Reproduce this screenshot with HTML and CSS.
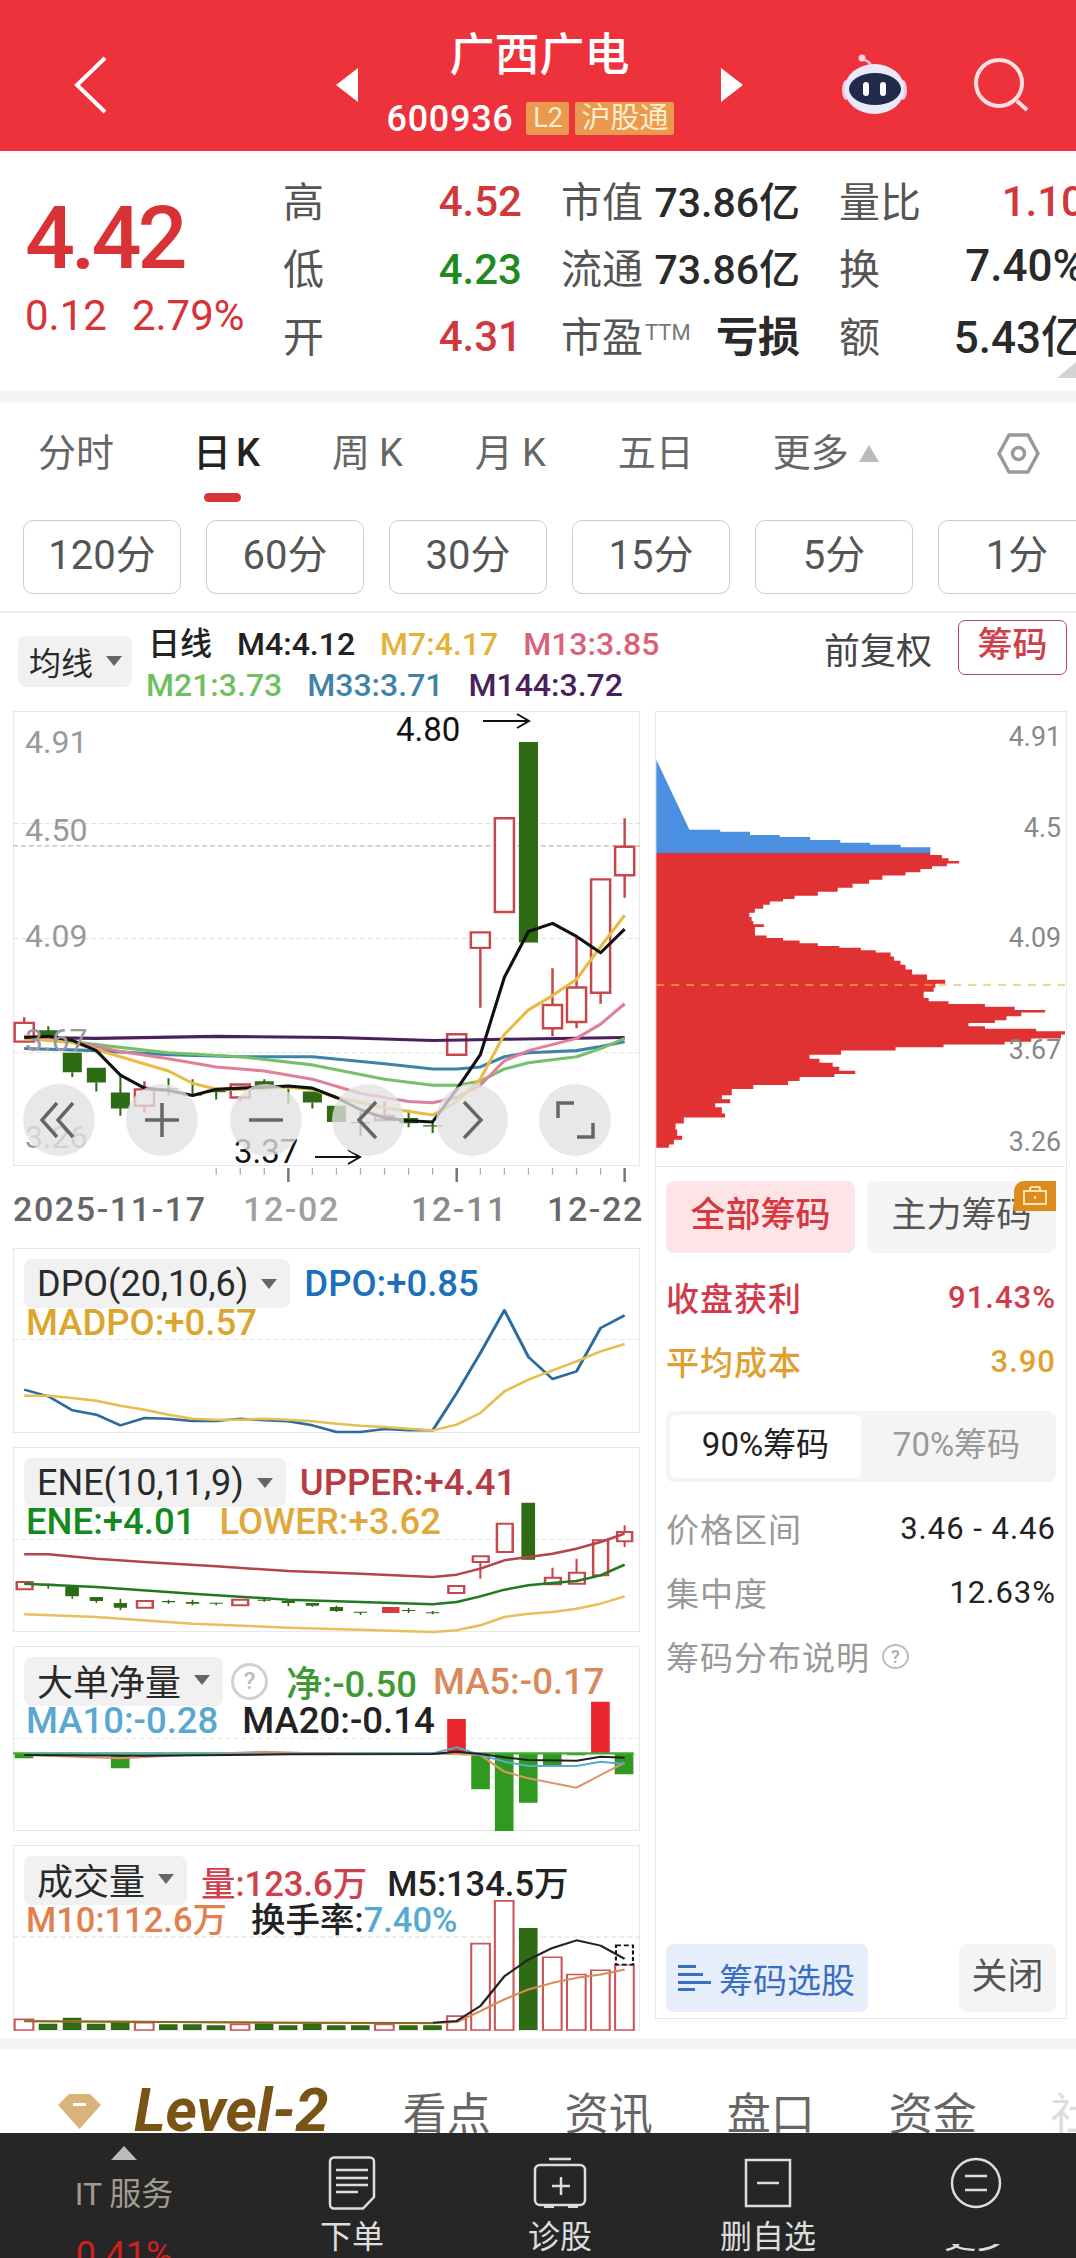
FILE: index.html
```html
<!DOCTYPE html>
<html lang="zh">
<head>
    <meta charset="utf-8">
    <title>广西广电 600936</title>
    <link rel="stylesheet" href="styles.css">
</head>
<body>
<div class="page">

    <header class="header">
        <svg class="back" viewBox="0 0 34 58"><path d="M31 2 3 29l28 27" fill="none" stroke="#fff" stroke-width="4"/></svg>
        <svg class="arrow prev" viewBox="0 0 22 34"><path d="M22 0V34L0 17Z" fill="#fff"/></svg>
        <div class="title-block">
            <div class="title">广西广电</div>
            <div class="code-row">
                <span class="code">600936</span>
                <span class="badge badge-l2">L2</span>
                <span class="badge badge-hk">沪股通</span>
            </div>
        </div>
        <svg class="arrow next" viewBox="0 0 22 34"><path d="M0 0V34L22 17Z" fill="#fff"/></svg>
        <svg class="robot" viewBox="0 0 65 61">
            <path d="M29 12C28 7 24 7 21 5" fill="none" stroke="#f6c6d0" stroke-width="2.5"/>
            <circle cx="20" cy="4" r="3.5" fill="#f8d0d8"/>
            <ellipse cx="4" cy="36" rx="4" ry="10" fill="#f4c8dc"/>
            <ellipse cx="61" cy="36" rx="4" ry="10" fill="#f4c8dc"/>
            <ellipse cx="32.5" cy="35" rx="30" ry="25" fill="#ebe8fa"/>
            <ellipse cx="33" cy="35" rx="26" ry="16" fill="#1f2a4c"/>
            <rect x="21" y="28" width="6" height="14" rx="3" fill="#fff"/>
            <rect x="38" y="28" width="6" height="14" rx="3" fill="#fff"/>
        </svg>
        <svg class="search" viewBox="0 0 57 54">
            <circle cx="26" cy="25" r="23" fill="none" stroke="#ffe0e0" stroke-width="4"/>
            <path d="M44 43 54 52" stroke="#ffe0e0" stroke-width="4"/>
        </svg>
    </header>

    <section class="quote">
        <div class="price-col">
            <div class="price">4.42</div>
            <div class="change"><span>0.12</span><span>2.79%</span></div>
        </div>
        <div class="quote-grid">
            <div class="cell"><span class="lbl">高</span><span class="up">4.52</span></div>
            <div class="cell"><span class="lbl">市值</span><span class="val">73.86亿</span></div>
            <div class="cell"><span class="lbl">量比</span><span class="up">1.10</span></div>
            <div class="cell"><span class="lbl">低</span><span class="down">4.23</span></div>
            <div class="cell"><span class="lbl">流通</span><span class="val">73.86亿</span></div>
            <div class="cell"><span class="lbl">换</span><span class="val val-edge">7.40%</span></div>
            <div class="cell"><span class="lbl">开</span><span class="up">4.31</span></div>
            <div class="cell"><span class="lbl">市盈<sup class="ttm">TTM</sup></span><span class="val val-bold">亏损</span></div>
            <div class="cell"><span class="lbl">额</span><span class="val val-edge">5.43亿</span></div>
        </div>
        <div class="corner"></div>
    </section>

    <nav class="tabs">
        <span class="tab tab-wide">分时</span>
        <span class="tab tab-k active">日K</span>
        <span class="tab tab-k">周K</span>
        <span class="tab tab-k">月K</span>
        <span class="tab tab-wide">五日</span>
        <span class="tab tab-more">更多<i class="tri-up"></i></span>
        <svg class="hex" viewBox="0 0 43 41">
            <path d="M12 2H31L41 20.5 31 39H12L2 20.5Z" fill="none" stroke="#999" stroke-width="3.5" stroke-linejoin="round"/>
            <circle cx="21.5" cy="20.5" r="6" fill="none" stroke="#999" stroke-width="3.5"/>
        </svg>
    </nav>

    <div class="periods">
        <span class="period">120分</span>
        <span class="period">60分</span>
        <span class="period">30分</span>
        <span class="period">15分</span>
        <span class="period">5分</span>
        <span class="period">1分</span>
    </div>

    <main class="chart-area">
        <div class="left-col">
            <div class="ma-legend">
                <div class="chip chip-small">均线<i class="tri-down"></i></div>
                <div class="ma-lines">
                    <div class="ma-row"><span class="dark">日线</span><span class="dark">M4:4.12</span><span class="c-m7">M7:4.17</span><span class="c-m13">M13:3.85</span></div>
                    <div class="ma-row ma-row-2"><span class="c-m21">M21:3.73</span><span class="c-m33">M33:3.71</span><span class="c-m144">M144:3.72</span></div>
                </div>
            </div>

            <div class="panel panel-main">
                <svg class="canvas" viewBox="0 0 627 455">
                    <svg x="0" y="0" width="627" height="455" viewBox="31 247 1512 1116" preserveAspectRatio="none">
                        <g stroke-width="2.5" stroke-dasharray="12 7" fill="none">
                            <path d="M31 523H1543M31 805H1543M31 1085H1543" stroke="#e0e0e0"/>
                            <path d="M31 578H1543" stroke="#c9b89a" stroke-width="3"/>
                        </g>
                        <path d="M116 1020V1050M174 1133V1145M232 1158V1180M290 1140V1240M406 1148V1190M464 1150V1190M521 1175V1200M637 1150V1175M695 1170V1210M753 1207V1222M869 1230V1290M985 1225V1268M1043 1250V1282" stroke="#2f6b14" stroke-width="5" fill="none"/>
                        <path d="M93 1030h46v20h-46zM151 1085h46v48h-46zM209 1122h46v36h-46zM267 1183h46v39h-46zM383 1172h46v3h-46zM441 1187h46v3h-46zM498 1178h46v4h-46zM614 1155h46v15h-46zM672 1170h46v3h-46zM730 1180h46v27h-46zM788 1215h46v40h-46zM846 1255h46v3h-46zM962 1245h46v13h-46zM1020 1263h46v3h-46zM1251 323h46v492h-46z" fill="#2f6b14"/>
                        <path d="M58 998V1012M348 1155V1232M579 1195V1205M927 1205V1245M1158 828V975M1332 878V968M1332 1025V1045M1390 798V925M1390 1010V1025M1448 938V965M1506 510V580M1506 650V705" stroke="#c8474b" stroke-width="6" fill="none"/>
                        <path d="M35 1012h46v46h-46zM325 1175h46v40h-46zM556 1163h46v32h-46zM904 1240h46v10h-46zM1078 1040h46v50h-46zM1135 790h46v38h-46zM1193 510h46v230h-46zM1309 968h46v57h-46zM1367 925h46v85h-46zM1425 660h46v278h-46zM1483 580h46v70h-46z" fill="#fff" stroke="#c8474b" stroke-width="6"/>
                        <g fill="none" stroke-width="7.5" stroke-linejoin="round">
                            <polyline stroke="#4b1f5c" points="58,1048 232,1050 521,1045 811,1048 1043,1055 1216,1052 1506,1048"/>
                            <polyline stroke="#3f83a8" points="58,1075 232,1080 406,1090 579,1095 753,1095 927,1112 1043,1125 1101,1125 1158,1120 1216,1095 1274,1085 1390,1080 1448,1070 1506,1058"/>
                            <polyline stroke="#75c06a" points="58,1045 174,1058 290,1072 406,1085 579,1095 753,1115 927,1150 1043,1165 1101,1165 1158,1155 1216,1125 1274,1110 1390,1095 1448,1075 1506,1050"/>
                            <polyline stroke="#e08098" points="58,1045 174,1058 290,1082 406,1100 521,1120 637,1130 753,1150 869,1185 985,1205 1043,1208 1101,1195 1158,1165 1216,1105 1274,1080 1390,1050 1448,1015 1506,965"/>
                            <polyline stroke="#e9bb45" points="58,1050 174,1060 290,1095 406,1130 464,1160 521,1175 579,1175 695,1170 753,1175 811,1195 927,1220 1043,1238 1101,1205 1158,1150 1216,1040 1274,980 1332,945 1390,905 1448,825 1506,748"/>
                            <polyline stroke="#111" points="58,1048 116,1045 174,1055 232,1080 290,1140 348,1172 406,1178 464,1190 521,1175 579,1172 637,1170 695,1167 753,1172 811,1195 869,1225 927,1245 985,1252 1043,1255 1101,1175 1158,1090 1216,900 1274,788 1332,768 1390,800 1448,840 1506,782"/>
                        </g>
                    </svg>
                    <g class="axis-text">
                        <text x="12" y="42">4.91</text>
                        <text x="12" y="130">4.50</text>
                        <text x="12" y="236">4.09</text>
                        <text x="12" y="340">3.67</text>
                        <text x="12" y="437">3.26</text>
                    </g>
                    <g class="note-text">
                        <text x="383" y="30">4.80</text>
                        <text x="221" y="452">3.37</text>
                    </g>
                    <path d="M470 10H516M504 3 516 10 504 17M302 446H347M335 439 347 446 335 453" fill="none" stroke="#111" stroke-width="2"/>
                    <g class="ctrl-bg">
                        <circle cx="46" cy="409" r="36"/>
                        <circle cx="149" cy="409" r="36"/>
                        <circle cx="253" cy="409" r="36"/>
                        <circle cx="355" cy="409" r="36"/>
                        <circle cx="459" cy="409" r="36"/>
                        <circle cx="562" cy="409" r="36"/>
                    </g>
                    <g class="ctrl-icon">
                        <path d="M44 392 29 409 44 426M60 392 45 409 60 426"/>
                        <path d="M149 392V426M132 409H166"/>
                        <path d="M236 409H270"/>
                        <path d="M363 391 346 409 363 427"/>
                        <path d="M451 391 468 409 451 427"/>
                        <path d="M545 407V392H561M580 412V426H564"/>
                    </g>
                </svg>
            </div>

            <div class="date-axis">
                <svg class="ticks" viewBox="31 1363 1512 40" preserveAspectRatio="none">
                    <path d="M521 1368V1385M579 1368V1385M637 1368V1385M753 1368V1385M811 1368V1385M869 1368V1385M927 1368V1385M985 1368V1385M1043 1368V1385M1158 1368V1385M1216 1368V1385M1274 1368V1385M1332 1368V1385M1390 1368V1385M1448 1368V1385" stroke="#aaa" stroke-width="3" fill="none"/>
                    <path d="M695 1368V1403M1101 1368V1403M1506 1368V1403" stroke="#777" stroke-width="6" fill="none"/>
                </svg>
                <div class="dates">
                    <span>2025-11-17</span>
                    <span class="date-light">12-02</span>
                    <span class="date-mid">12-11</span>
                    <span>12-22</span>
                </div>
            </div>

            <div class="panel panel-ind">
                <svg class="canvas" viewBox="31 25 1512 555" preserveAspectRatio="none">
                    <path d="M31 300H1543" stroke="#ddd" stroke-width="2.5" stroke-dasharray="12 7"/>
                    <g fill="none" stroke-width="7.5" stroke-linejoin="round">
                        <polyline stroke="#2b6b9e" points="58,450 116,470 174,512 232,525 290,557 348,535 406,537 464,544 521,544 579,537 637,542 695,545 753,557 811,577 869,577 927,568 985,572 1043,572 1101,460 1158,340 1216,212 1274,352 1332,418 1390,395 1448,265 1506,227"/>
                        <polyline stroke="#e5c050" points="58,468 116,468 174,475 232,483 290,498 348,510 406,525 464,537 521,540 579,540 637,537 695,540 753,545 811,552 869,558 927,562 985,567 1043,572 1101,555 1158,520 1216,455 1274,420 1332,392 1390,365 1448,335 1506,313"/>
                    </g>
                </svg>
                <div class="ind-row">
                    <div class="chip">DPO(20,10,6)<i class="tri-down"></i></div>
                    <span class="ind-val c-dpo">DPO:+0.85</span>
                </div>
                <div class="ind-row-2"><span class="c-madpo">MADPO:+0.57</span></div>
            </div>

            <div class="panel panel-ind">
                <svg class="canvas" viewBox="31 620 1512 555" preserveAspectRatio="none">
                    <path d="M31 897H1543" stroke="#ddd" stroke-width="2.5" stroke-dasharray="12 7"/>
                    <path d="M116 1030V1045M174 1068V1075M232 1082V1088M290 1075V1110M406 1078V1090M464 1078V1095M521 1087V1095M637 1072V1084M695 1082V1098M753 1096V1100M811 1096V1115M869 1115V1124M985 1103V1118M1043 1112V1122" stroke="#2f6b14" stroke-width="4" fill="none"/>
                    <path d="M100 1030h32v5h-32zM157 1040h33v28h-33zM216 1070h32v12h-32zM274 1088h32v14h-32zM390 1082h32v4h-32zM448 1085h32v5h-32zM505 1087h32v3h-32zM621 1078h32v3h-32zM679 1082h32v6h-32zM737 1088h32v8h-32zM795 1100h32v12h-32zM853 1114h32v3h-32zM969 1109h32v3h-32zM1027 1116h32v3h-32zM1257 787h33v171h-33z" fill="#2f6b14"/>
                    <path d="M921 1100h42v18h-42z" fill="#d63b40"/>
                    <path d="M1158 965V1015M1332 982V1012M1390 955V997M1448 1005V1008M1506 855V875M1506 903V920" stroke="#c8474b" stroke-width="5" fill="none"/>
                    <g fill="#fff" stroke="#c8474b" stroke-width="6">
                        <path d="M40 1025h38v22h-38zM330 1082h38v20h-38zM560 1078h38v17h-38zM1081 1037h38v21h-38zM1140 948h38v17h-38zM1198 850h38v85h-38zM1314 1012h38v20h-38zM1372 997h38v33h-38zM1430 900h36v105h-36zM1488 875h36v28h-36z"/>
                    </g>
                    <g fill="none" stroke-width="7.5" stroke-linejoin="round">
                        <polyline stroke="#b5444c" points="58,942 116,942 232,955 348,965 521,978 695,992 869,1000 1043,1010 1101,1003 1158,985 1216,960 1274,950 1332,940 1390,925 1448,905 1506,880"/>
                        <polyline stroke="#1f7a20" points="58,1030 232,1040 464,1060 695,1078 869,1085 1043,1092 1101,1085 1158,1068 1216,1048 1274,1035 1332,1028 1390,1022 1448,1005 1506,973"/>
                        <polyline stroke="#e8bf5a" points="58,1122 232,1130 464,1150 695,1162 869,1168 1043,1175 1101,1170 1158,1155 1216,1130 1274,1120 1332,1115 1390,1105 1448,1090 1506,1068"/>
                    </g>
                </svg>
                <div class="ind-row">
                    <div class="chip">ENE(10,11,9)<i class="tri-down"></i></div>
                    <span class="ind-val c-upper">UPPER:+4.41</span>
                </div>
                <div class="ind-row-2"><span class="c-ene">ENE:+4.01</span><span class="c-lower">LOWER:+3.62</span></div>
            </div>

            <div class="panel panel-ind">
                <svg class="canvas" viewBox="31 18 1512 555" preserveAspectRatio="none">
                    <path d="M31 295H1543" stroke="#ddd" stroke-width="2.5" stroke-dasharray="12 7"/>
                    <path d="M1078 237h45v103h-45zM1425 185h45v155h-45z" fill="#e8262c"/>
                    <path d="M35 340h45v15h-45zM267 340h45v45h-45zM1136 340h45v108h-45zM1193 340h45v233h-45zM1251 340h45v148h-45zM1309 340h45v40h-45zM1367 340h45v6h-45zM1482 340h45v63h-45z" fill="#2f9a1f"/>
                    <path d="M31 340H1528" stroke="#3fae2c" stroke-width="7"/>
                    <g fill="none" stroke-width="6" stroke-linejoin="round">
                        <polyline stroke="#de9568" points="58,345 290,355 406,347 637,335 753,340 1043,340 1158,345 1216,395 1274,415 1390,443 1448,405 1506,368"/>
                        <polyline stroke="#5ba8d0" points="58,343 1043,340 1101,322 1158,345 1216,365 1274,378 1390,378 1448,365 1506,372"/>
                        <polyline stroke="#222" points="58,345 348,347 695,343 1043,342 1101,335 1158,342 1216,352 1274,360 1390,362 1448,350 1506,353"/>
                    </g>
                </svg>
                <div class="ind-row ind-row-big">
                    <div class="chip chip-cjk">大单净量<i class="tri-down"></i></div>
                    <span class="help">?</span>
                    <span class="ind-val c-net">净:-0.50</span>
                    <span class="c-ma5">MA5:-0.17</span>
                </div>
                <div class="ind-row-2"><span class="c-ma10">MA10:-0.28</span><span class="dark">MA20:-0.14</span></div>
            </div>

            <div class="panel panel-ind panel-vol">
                <svg class="canvas" viewBox="31 615 1512 557" preserveAspectRatio="none">
                    <path d="M31 892H1543" stroke="#ddd" stroke-width="2.5" stroke-dasharray="12 7"/>
                    <path d="M93 1153h45v19h-45zM151 1135h45v37h-45zM209 1153h45v19h-45zM267 1148h45v24h-45zM383 1155h45v17h-45zM441 1155h45v17h-45zM498 1158h45v14h-45zM614 1152h45v20h-45zM672 1158h45v14h-45zM730 1152h45v20h-45zM788 1158h45v14h-45zM846 1158h45v14h-45zM962 1158h45v14h-45zM1020 1158h45v14h-45zM1251 865h45v307h-45z" fill="#2f6b14"/>
                    <path d="M35 1140h45v32h-45zM325 1150h45v22h-45zM556 1155h45v17h-45zM904 1155h45v17h-45zM1078 1130h45v42h-45zM1136 912h45v260h-45zM1193 783h45v389h-45zM1309 953h45v219h-45zM1367 1005h45v167h-45zM1425 992h45v180h-45zM1483 975h45v197h-45z" fill="#fff" stroke="#c9555a" stroke-width="5"/>
                    <path d="M1485 917h41v58h-41z" fill="#fff" stroke="#111" stroke-width="5" stroke-dasharray="12 7"/>
                    <g fill="none" stroke-width="6" stroke-linejoin="round">
                        <polyline stroke="#d98a55" points="58,1145 695,1150 1043,1152 1101,1148 1158,1115 1216,1080 1274,1050 1332,1030 1390,1015 1448,1005 1506,990"/>
                        <polyline stroke="#222" points="1043,1150 1101,1145 1158,1100 1216,1010 1274,960 1332,925 1390,902 1448,918 1506,958"/>
                        <polyline stroke="#8a6a20" points="58,1146 695,1150 1043,1151"/>
                    </g>
                </svg>
                <div class="ind-row">
                    <div class="chip chip-cjk">成交量<i class="tri-down"></i></div>
                    <span class="ind-val c-vol">量:123.6万</span>
                    <span class="dark">M5:134.5万</span>
                </div>
                <div class="ind-row-2"><span class="c-m10">M10:112.6万</span><span class="dark">换手率:<span class="c-rate">7.40%</span></span></div>
            </div>
        </div>

        <div class="right-col">
            <div class="right-head">
                <span class="fq">前复权</span>
                <span class="chip-btn">筹码</span>
            </div>
            <aside class="panel chips-panel">
                <svg class="hist" viewBox="0 0 412 455">
                    <svg x="0" y="0" width="412" height="455" viewBox="46 247 1236 1115" preserveAspectRatio="none">
                        <path d="M47 362 147 535H240V540H330V548H420V553H512V560H603V567H693V572H785V578H875V592H47Z" fill="#4a8fe0"/>
                        <path d="M47 592H875V597H910V605H930V612H962V618H925V625H880V632H845V640H800V648H730V658H690V668H640V678H595V688H535V698H465V706H430V712H390V720H370V730H345V740H328V750H335V760H340V768H372V775H345V790H345V796H380V802H430V808H480V815H535V822H600V826H665V832H710V838H755V848H765V858H785V868H800V880H820V892H865V905H920V915H890V925H885V935H855V950H870V958H930V965H1040V972H1130V980H1222V986H1150V995H1105V1005H1070V1012H990V1020H1040V1026H1195V1032H1282V1040H1270V1050H1180V1058H1100V1065H915V1072H770V1080H605V1090H510V1100H540V1110H580V1120H600V1130H648V1138H585V1145H480V1155H445V1165H340V1175H275V1190H245V1200H270V1210H225V1220H245V1235H255V1245H130V1260H105V1275H110V1290H125V1300H100V1312H85V1320H47Z" fill="#e03232"/>
                        <path d="M47 918H900" stroke="#f0a030" stroke-width="4" stroke-dasharray="24 21" fill="none"/>
                        <path d="M900 918H1282" stroke="#e8cd6a" stroke-width="4" stroke-dasharray="24 21" fill="none"/>
                    </svg>
                    <g class="hist-text">
                        <text x="408" y="33">4.91</text>
                        <text x="408" y="125">4.5</text>
                        <text x="408" y="236">4.09</text>
                        <text x="408" y="348">3.67</text>
                        <text x="408" y="441">3.26</text>
                    </g>
                </svg>
                <div class="chips-body">
                    <div class="seg-row">
                        <span class="seg seg-on">全部筹码</span>
                        <span class="seg">主力筹码
                            <i class="lock"><svg viewBox="0 0 26 20"><path d="M8 5V3a2 2 0 0 1 2-2h6a2 2 0 0 1 2 2v2M2 5h22v13H2ZM13 10v3" fill="none" stroke="#ffe4b0" stroke-width="2"/></svg></i>
                        </span>
                    </div>
                    <div class="stat stat-first c-profit"><span>收盘获利</span><b>91.43%</b></div>
                    <div class="stat c-cost"><span>平均成本</span><b>3.90</b></div>
                    <div class="toggle">
                        <span class="toggle-on">90%筹码</span>
                        <span class="toggle-off">70%筹码</span>
                    </div>
                    <div class="stat stat-gray stat-range"><span>价格区间</span><em>3.46 - 4.46</em></div>
                    <div class="stat stat-gray"><span>集中度</span><em>12.63%</em></div>
                    <div class="stat stat-gray stat-note"><span>筹码分布说明</span><span class="help help-small">?</span></div>
                    <div class="chips-foot">
                        <span class="pick">
                            <svg class="pick-icon" viewBox="0 0 33 28"><path d="M0 1h18v3H0zM0 9h25v3H0zM0 17h33v3H0zM0 24h17v3H0z" fill="#3a6ec0"/></svg>筹码选股
                        </span>
                        <span class="close">关闭</span>
                    </div>
                </div>
            </aside>
        </div>
    </main>

    <nav class="news-tabs">
        <svg class="gem" viewBox="0 0 43 35"><path d="M11 0H32L43 11 21.5 35 0 11Z" fill="#d9b47a"/><path d="M15 9H28V12H15Z" fill="#fff"/></svg>
        <span class="level2">Level-2</span>
        <span class="news-tab">看点</span>
        <span class="news-tab">资讯</span>
        <span class="news-tab">盘口</span>
        <span class="news-tab">资金</span>
        <span class="news-tab news-fade">社区</span>
    </nav>

    <footer class="bottom-bar">
        <div class="bar-item bar-sector">
            <i class="sector-tri"></i>
            <span class="sector-name">IT 服务</span>
            <span class="sector-pct">0.41%</span>
        </div>
        <div class="bar-item">
            <svg class="bar-icon" viewBox="0 0 60 54">
                <path d="M12 1.5H48a4 4 0 0 1 4 4V41L41 52.5H12a4 4 0 0 1-4-4V5.500a4 4 0 0 1 4-4Z" fill="none" stroke="#ddd" stroke-width="2.500"/>
                <path d="M14 14H46M14 22H46M14 29H46M14 36H36" stroke="#ddd" stroke-width="2.500"/>
            </svg>
            <span class="bar-label">下单</span>
        </div>
        <div class="bar-item">
            <svg class="bar-icon" viewBox="0 0 60 54">
                <path d="M19 3H41M10 9H50a5 5 0 0 1 5 5V44a5 5 0 0 1-5 5H10a5 5 0 0 1-5-5V14a5 5 0 0 1 5-5Z" fill="none" stroke="#ddd" stroke-width="2.500"/>
                <path d="M14 49h10v3H14zM38 49h10v3H38z" fill="#ddd"/>
                <path d="M31 21V39M22 30H40" stroke="#ddd" stroke-width="2.500"/>
            </svg>
            <span class="bar-label">诊股</span>
        </div>
        <div class="bar-item">
            <svg class="bar-icon" viewBox="0 0 60 54">
                <path d="M8 4H52V50H8Z" fill="none" stroke="#ddd" stroke-width="2.500"/>
                <path d="M19 27H41" stroke="#ddd" stroke-width="2.500"/>
            </svg>
            <span class="bar-label">删自选</span>
        </div>
        <div class="bar-item">
            <svg class="bar-icon" viewBox="0 0 60 54">
                <circle cx="30" cy="27" r="24" fill="none" stroke="#ddd" stroke-width="2.500"/>
                <path d="M19 20H41M19 34H41" stroke="#ddd" stroke-width="2.500"/>
            </svg>
            <span class="bar-label bar-smudged">更多</span>
        </div>
    </footer>
</div>
</body>
</html>
```

FILE: styles.css
```css
* {
    box-sizing: border-box;
}

body {
    margin: 0;
    background: #fff;
    font-family: Roboto, "Noto Sans CJK SC", sans-serif;
    color: #222;
}

.page {
    width: 1076px;
    height: 2258px;
    overflow: hidden;
    position: relative;
}

i {
    font-style: normal;
}

/* header */
.header {
    display: flex;
    align-items: center;
    height: 151px;
    padding-top: 18px;
    background: #ee323c;
    color: #fff;
}

.back {
    width: 34px;
    height: 58px;
    margin-left: 74px;
}

.arrow {
    width: 22px;
    height: 34px;
}

.prev {
    margin-left: 228px;
}

.title-block {
    width: 363px;
    align-self: flex-start;
    margin-top: 13px;
    text-align: center;
}

.title {
    font-size: 45px;
    line-height: 50px;
    font-weight: 500;
}

.code-row {
    display: flex;
    justify-content: center;
    align-items: center;
    gap: 6px;
    margin-top: 21px;
    padding-right: 18px;
    height: 33px;
}

.code {
    font-size: 36px;
    font-weight: 500;
    letter-spacing: .7px;
    margin-right: 7px;
}

.badge {
    height: 33px;
    line-height: 33px;
    font-size: 27px;
    background: #ea9a4e;
    color: #ffeccc;
    border-radius: 2px;
    text-align: center;
}

.badge-l2 {
    width: 43px;
}

.badge-hk {
    width: 99px;
    font-size: 29px;
}

.robot {
    width: 65px;
    height: 61px;
    margin-left: 99px;
}

.search {
    width: 57px;
    height: 54px;
    margin-left: 66px;
}

/* quote */
.quote {
    display: flex;
    position: relative;
    height: 240px;
    padding: 14px 0 0 25px;
    overflow: hidden;
}

.price-col {
    width: 258px;
    flex: none;
    padding-top: 33px;
    color: #d83236;
}

.price {
    font-size: 88px;
    line-height: 80px;
    font-weight: 500;
    letter-spacing: -4px;
}

.change {
    display: flex;
    gap: 25px;
    margin-top: 16px;
    font-size: 42px;
    line-height: 44px;
}

.quote-grid {
    display: grid;
    grid-template-columns: 239px 239px 246px;
    grid-auto-rows: 67.500px;
    column-gap: 39px;
    flex: none;
    font-size: 41px;
}

.cell {
    display: flex;
    justify-content: space-between;
    align-items: center;
    white-space: nowrap;
}

.lbl {
    color: #555;
}

.up,
.down {
    padding-top: 6px;
    font-size: 42px;
    font-weight: 500;
}

.up {
    color: #d0383c;
}

.down {
    color: #1f8a1f;
}

.val {
    color: #2a2a2a;
    font-weight: 500;
}

.val-edge {
    font-size: 44px;
}

.val-bold {
    font-weight: 700;
    font-size: 42px;
}

.ttm {
    font-size: 22px;
    color: #777;
    vertical-align: 12px;
    line-height: 0;
    margin-left: 2px;
}

.corner {
    position: absolute;
    right: 0;
    bottom: 13px;
    border-bottom: 16px solid #d4d4d4;
    border-left: 19px solid transparent;
}

/* period tabs */
.tabs {
    display: flex;
    align-items: center;
    gap: 72px;
    height: 129px;
    padding: 20px 0 37px 38px;
    border-top: 12px solid #f5f5f5;
    font-size: 38px;
    color: #666;
}

.tab {
    position: relative;
    line-height: 60px;
    white-space: nowrap;
}

.tab-wide {
    margin-right: 7px;
}

.tab-k {
    letter-spacing: 9px;
    margin-right: -9px;
}

.tab.active {
    color: #222;
    font-weight: 500;
    letter-spacing: 5px;
    margin-right: -5px;
}

.tab.active::after {
    content: "";
    position: absolute;
    left: 11px;
    top: 70px;
    width: 37px;
    height: 9px;
    border-radius: 5px;
    background: #d8343a;
}

.tab-more {
    display: flex;
    align-items: center;
}

.tri-up {
    width: 0;
    height: 0;
    margin-left: 10px;
    border-left: 10px solid transparent;
    border-right: 10px solid transparent;
    border-bottom: 17px solid #bbb;
}

.hex {
    width: 43px;
    height: 41px;
    margin-left: 46px;
}

.periods {
    display: flex;
    gap: 25px;
    height: 93px;
    padding-left: 23px;
    border-bottom: 2px solid #eee;
    overflow: hidden;
}

.period {
    flex: none;
    width: 158px;
    height: 74px;
    line-height: 70px;
    text-align: center;
    font-size: 40px;
    color: #555;
    border: 1.500px solid #ccc;
    border-radius: 10px;
}

/* chart area */
.chart-area {
    display: flex;
    gap: 15px;
    padding-left: 13px;
}

.left-col {
    width: 627px;
    flex: none;
}

.ma-legend {
    display: flex;
    height: 98px;
    padding: 11px 0 0 5px;
}

.chip {
    display: flex;
    align-items: center;
    height: 49px;
    padding: 0 13px;
    background: #f1f1f1;
    border-radius: 8px;
    font-size: 36px;
    font-weight: 400;
    color: #2a2a2a;
    white-space: nowrap;
}

.chip-cjk {
    padding-bottom: 3px;
}

.chip-small {
    width: 114px;
    height: 51px;
    margin-top: 12px;
    padding: 0 11px 2px;
    font-size: 32px;
    flex: none;
}

.tri-down {
    width: 0;
    height: 0;
    margin-left: 13px;
    border-left: 8px solid transparent;
    border-right: 8px solid transparent;
    border-top: 10px solid #666;
}

.ma-lines {
    margin-left: 16px;
    font-size: 32px;
    font-weight: 500;
    line-height: 40px;
    white-space: nowrap;
}

.ma-row {
    display: flex;
    gap: 25px;
}

.ma-row-2 {
    margin: 1px 0 0 -2px;
}

.dark { color: #222; }
.c-m7 { color: #e5b23a; }
.c-m13 { color: #d9627a; }
.c-m21 { color: #6fbf5f; }
.c-m33 { color: #3f83a8; }
.c-m144 { color: #4b1f5c; }
.c-dpo { color: #1c6fbb; }
.c-madpo { color: #dba52e; }
.c-upper { color: #b83a42; }
.c-ene { color: #128a1e; }
.c-lower { color: #e0a83a; }
.c-net { color: #3f9a35; }
.c-ma5 { color: #d98a5a; }
.c-ma10 { color: #5aa8d0; }
.c-vol { color: #d0404a; }
.c-m10 { color: #e08050; }
.c-rate { color: #55aad0; }

.panel {
    position: relative;
    border: 1.500px solid #e8e8e8;
}

.panel-main {
    height: 455px;
}

.canvas {
    position: absolute;
    left: -1.500px;
    top: -1.500px;
    width: 627px;
    height: 100%;
    overflow: visible;
}

.panel-main .canvas {
    height: 455px;
}

.panel-ind .canvas {
    height: 185px;
}

.axis-text {
    font-size: 32px;
    fill: #999;
}

.note-text {
    font-size: 33px;
    fill: #111;
}

.ctrl-bg {
    fill: rgba(226, 226, 226, .78);
}

.ctrl-icon {
    fill: none;
    stroke: #666;
    stroke-width: 3.500px;
}

.date-axis {
    height: 82px;
}

.ticks {
    display: block;
    width: 627px;
    height: 16px;
}

.dates {
    display: grid;
    grid-template-columns: 230px 168px 136px 93px;
    margin-top: 7px;
    font-size: 34px;
    line-height: 40px;
    font-weight: 500;
    letter-spacing: 1.600px;
    white-space: nowrap;
    color: #666;
}

.date-light { color: #a0a0a0; }
.date-mid { color: #888; }

.panel-ind {
    height: 185px;
    margin-bottom: 14px;
    padding: 10px 0 0 10px;
    font-size: 36.500px;
    font-weight: 500;
    white-space: nowrap;
}

.panel-vol {
    height: 186px;
    margin-bottom: 0;
    font-size: 34.500px;
}

.ind-row,
.ind-row-2 {
    position: relative;
    display: flex;
}

.ind-row {
    align-items: center;
    gap: 20px;
    height: 49px;
}

.ind-row-2 {
    gap: 24px;
    padding-left: 2px;
    line-height: 30px;
}

.ind-val {
    margin-left: -6px;
}

.ind-row-big {
    gap: 16px;
}

.help {
    display: inline-block;
    width: 37px;
    height: 37px;
    margin-left: -8px;
    line-height: 31px;
    text-align: center;
    font-size: 24px;
    font-weight: 500;
    color: #bbb;
    border: 3px solid #d0d0d0;
    border-radius: 50%;
}

.ind-row-big .ind-val {
    margin-left: 2px;
}

/* right column */
.right-col {
    width: 412px;
    flex: none;
}

.right-head {
    display: flex;
    justify-content: flex-end;
    align-items: center;
    gap: 26px;
    height: 98px;
    padding-bottom: 29px;
}

.fq {
    font-size: 36px;
    color: #444;
}

.chip-btn {
    width: 109px;
    height: 55px;
    line-height: 50px;
    text-align: center;
    font-size: 35px;
    font-weight: 500;
    color: #d0404a;
    border: 1.500px solid #b04a50;
    border-radius: 7px;
}

.chips-panel {
    height: 1308px;
}

.hist {
    display: block;
    width: 409px;
    height: 455px;
    border-bottom: 1.500px solid #e0e0e0;
    overflow: hidden;
}

.hist-text {
    font-size: 27px;
    fill: #888;
    text-anchor: end;
}

.chips-body {
    display: flex;
    flex-direction: column;
    height: 850px;
    padding: 14px 10px 5px;
    font-size: 33px;
}

.seg-row {
    display: flex;
    gap: 12px;
}

.seg {
    position: relative;
    flex: 1;
    height: 72px;
    line-height: 70px;
    text-align: center;
    font-size: 35px;
    color: #555;
    background: #f4f4f4;
    border-radius: 8px;
}

.seg-on {
    background: #fde5e7;
    color: #d9363e;
    font-weight: 500;
}

.lock {
    position: absolute;
    right: 0;
    top: 0;
    width: 42px;
    height: 30px;
    background: #dd8a1f;
    border-radius: 10px 0 0 0;
    line-height: 0;
}

.lock svg {
    width: 26px;
    height: 20px;
    margin-top: 5px;
}

.stat {
    display: flex;
    justify-content: space-between;
    align-items: center;
    height: 50px;
    margin-top: 14px;
    letter-spacing: 1px;
}

.stat b {
    font-size: 31px;
    font-weight: 500;
    letter-spacing: 1px;
}

.stat em {
    font-style: normal;
    font-size: 31px;
    color: #222;
    letter-spacing: 1px;
}

.stat-first {
    margin-top: 19px;
}

.c-profit { color: #d23a4a; font-weight: 500; }
.c-cost { color: #e0a030; font-weight: 500; }

.toggle {
    display: flex;
    height: 71px;
    margin-top: 25px;
    padding: 4px;
    background: #f4f4f4;
    border-radius: 8px;
}

.toggle span {
    flex: 1;
    line-height: 60px;
    text-align: center;
}

.toggle-on {
    flex: none !important;
    width: 191px;
    background: #fff;
    border-radius: 6px;
    color: #222;
}

.toggle-off {
    color: #999;
}

.stat-gray {
    color: #999;
}

.stat-range {
    margin-top: 21px;
}

.stat-note {
    justify-content: flex-start;
    gap: 12px;
    margin-top: 14px;
}

.help-small {
    width: 27px;
    height: 25px;
    margin: 0;
    line-height: 21px;
    font-size: 18px;
    border-width: 2px;
    letter-spacing: 0;
    color: #aaa;
    border-color: #bbb;
}

.chips-foot {
    display: flex;
    justify-content: space-between;
    margin-top: auto;
}

.pick {
    display: flex;
    align-items: center;
    gap: 8px;
    width: 202px;
    height: 68px;
    padding-left: 12px;
    background: #e6eefb;
    border-radius: 8px;
    font-size: 34px;
    color: #3a6ec0;
    white-space: nowrap;
}

.pick-icon {
    width: 33px;
    height: 28px;
    flex: none;
}

.close {
    width: 97px;
    height: 68px;
    line-height: 66px;
    text-align: center;
    background: #f4f4f4;
    border-radius: 8px;
    font-size: 36px;
    color: #555;
}

/* news tabs */
.news-tabs {
    display: flex;
    align-items: center;
    gap: 74px;
    height: 95px;
    margin-top: 7px;
    padding: 40px 0 0 58px;
    border-top: 11px solid #f5f5f5;
    overflow: hidden;
    white-space: nowrap;
    font-size: 44px;
    color: #666;
}

.gem {
    width: 43px;
    height: 35px;
    flex: none;
    margin-right: -41px;
}

.level2 {
    font-size: 60px;
    font-weight: 700;
    font-style: italic;
    color: #7a5415;
    line-height: 60px;
}

.news-fade {
    color: #ddd;
}

/* bottom bar */
.bottom-bar {
    display: grid;
    grid-template-columns: 248px repeat(4, 208px);
    height: 125px;
    background: #262626;
    overflow: hidden;
}

.bar-item {
    display: flex;
    flex-direction: column;
    align-items: center;
    padding-top: 23px;
}

.bar-icon {
    width: 60px;
    height: 54px;
}

.bar-label {
    position: relative;
    margin-top: 7px;
    font-size: 32px;
    line-height: 40px;
    color: #ddd;
}

.bar-smudged::after {
    content: "";
    position: absolute;
    left: -14px;
    right: -14px;
    top: 0;
    height: 27px;
    background: #262626;
}

.bar-sector {
    padding-top: 13px;
}

.sector-tri {
    border-left: 13px solid transparent;
    border-right: 13px solid transparent;
    border-bottom: 14px solid #bbb;
}

.sector-name {
    margin-top: 14px;
    font-size: 32px;
    line-height: 40px;
    color: #a09a90;
}

.sector-pct {
    margin-top: 21px;
    font-size: 36px;
    line-height: 40px;
    color: #d02020;
}
```
